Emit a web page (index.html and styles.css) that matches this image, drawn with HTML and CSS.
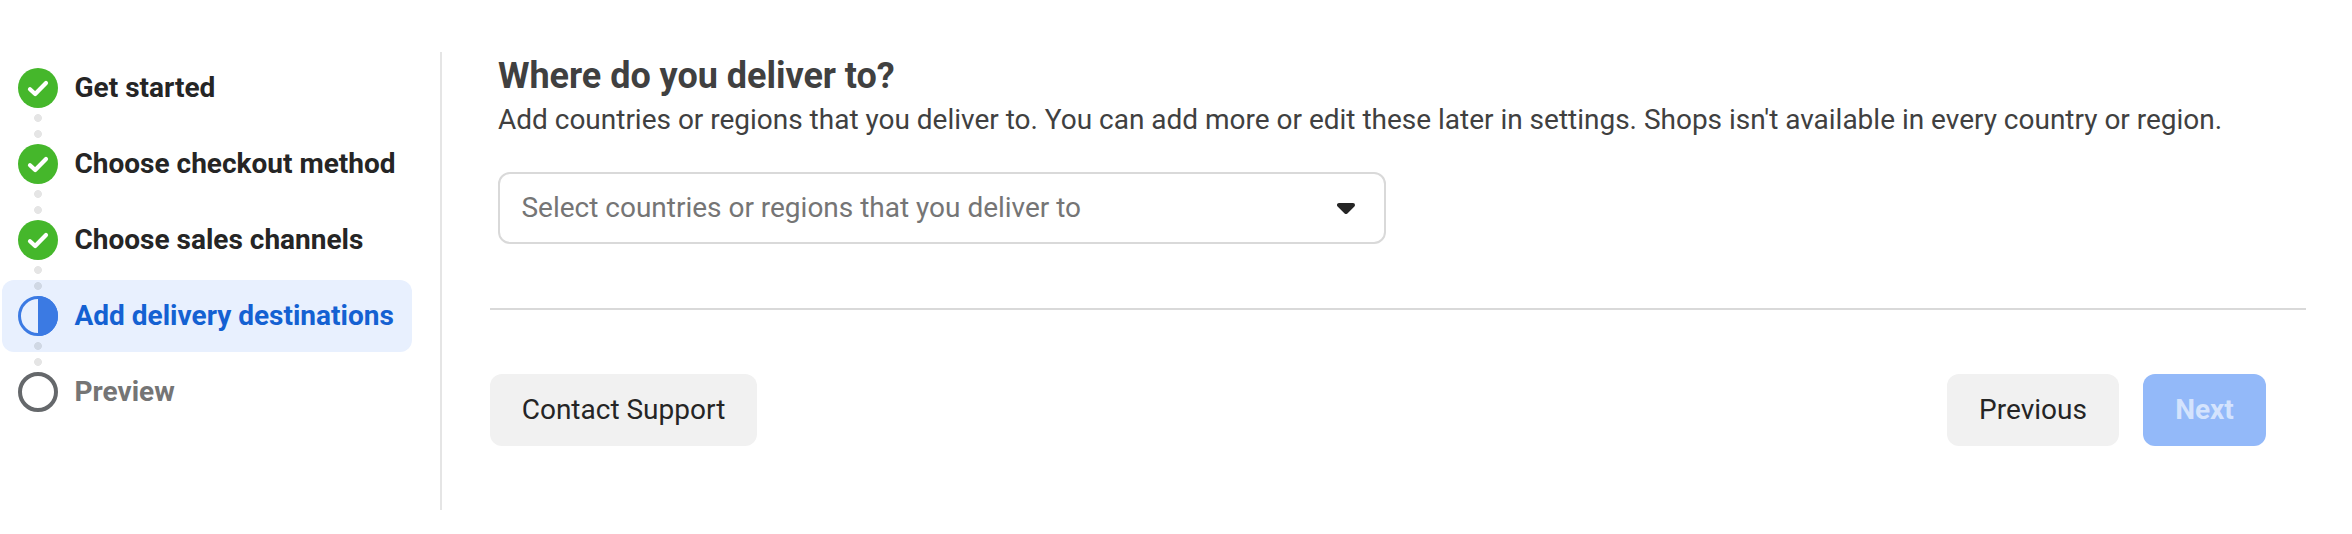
FILE: index.html
```html
<!DOCTYPE html>
<html lang="en">
<head>
  <meta charset="UTF-8" />
  <meta name="viewport" content="width=device-width, initial-scale=1.0" />
  <title>Add delivery destinations</title>
  <link rel="stylesheet" href="styles.css">
</head>
<body>
  <div class="page">
    <nav class="sidebar">
      <ol class="steps">
        <li class="step">
          <svg class="step-icon" viewBox="0 0 40 40">
            <circle cx="20" cy="20" r="20" fill="#45b72b" />
            <path d="M12 21.2 L17.2 26 L28 15" fill="none" stroke="#fff" stroke-width="4.2" stroke-linecap="round" stroke-linejoin="round" />
          </svg>
          <span>Get started</span>
        </li>
        <li class="step">
          <svg class="step-icon" viewBox="0 0 40 40">
            <circle cx="20" cy="20" r="20" fill="#45b72b" />
            <path d="M12 21.2 L17.2 26 L28 15" fill="none" stroke="#fff" stroke-width="4.2" stroke-linecap="round" stroke-linejoin="round" />
          </svg>
          <span>Choose checkout method</span>
        </li>
        <li class="step">
          <svg class="step-icon" viewBox="0 0 40 40">
            <circle cx="20" cy="20" r="20" fill="#45b72b" />
            <path d="M12 21.2 L17.2 26 L28 15" fill="none" stroke="#fff" stroke-width="4.2" stroke-linecap="round" stroke-linejoin="round" />
          </svg>
          <span>Choose sales channels</span>
        </li>
        <li class="step active">
          <svg class="step-icon" viewBox="0 0 40 40">
            <circle cx="20" cy="20" r="18.5" fill="none" stroke="#3b7ae3" stroke-width="3" />
            <path d="M20 0 A20 20 0 0 1 20 40 Z" fill="#3b7ae3" />
          </svg>
          <span>Add delivery destinations</span>
        </li>
        <li class="step upcoming">
          <svg class="step-icon" viewBox="0 0 40 40">
            <circle cx="20" cy="20" r="18" fill="none" stroke="#65686b" stroke-width="4" />
          </svg>
          <span>Preview</span>
        </li>
      </ol>
    </nav>

    <main class="content">
      <section class="question">
        <h1>Where do you deliver to?</h1>
        <p>Add countries or regions that you deliver to. You can add more or edit these later in settings. Shops isn't available in every country or region.</p>
        <div class="select" role="combobox" tabindex="0">
          <span>Select countries or regions that you deliver to</span>
          <svg class="arrow" viewBox="0 0 18 11">
            <path d="M2 2 H16 L9 9 Z" fill="#252525" stroke="#252525" stroke-width="4" stroke-linejoin="round" />
          </svg>
        </div>
      </section>

      <footer class="actions">
        <button class="btn contact" type="button">Contact Support</button>
        <div class="nav-buttons">
          <button class="btn previous" type="button">Previous</button>
          <button class="btn next" type="button" disabled>Next</button>
        </div>
      </footer>
    </main>
  </div>
</body>
</html>
```
FILE: styles.css
```css
* {
  box-sizing: border-box;
}
body {
  margin: 0;
  background: #fff;
  color: #252525;
  font-family: Roboto, "Liberation Sans", sans-serif;
  font-size: 28px;
  line-height: 40px;
}
.page {
  display: flex;
  height: 534px;
  padding: 52px 46px 24px 2px;
}

/* Steps */
.sidebar {
  width: 440px;
  flex-shrink: 0;
  border-right: 2px solid #e5e5e5;
}
.steps {
  display: flex;
  flex-direction: column;
  gap: 4px;
  width: 410px;
  margin: 0;
  padding: 0;
  list-style: none;
}
.step {
  position: relative;
  display: flex;
  align-items: center;
  gap: 16.5px;
  height: 72px;
  padding: 0 16px;
  border-radius: 12px;
  font-weight: 700;
  white-space: nowrap;
}
.step-icon {
  width: 40px;
  height: 40px;
  flex-shrink: 0;
}
.step span {
  margin-top: -1px;
}
/* two dots linking a step to the next one */
.step:not(:last-child)::after {
  content: "";
  position: absolute;
  z-index: 1;
  left: 32px;
  top: 58px;
  width: 8px;
  height: 32px;
  background: radial-gradient(circle, rgba(0, 0, 0, 0.1) 3.6px, transparent 4.2px) 0 0 / 8px 16px;
}
.step.active {
  background: #e8f0fe;
  color: #1461d2;
}
.step.upcoming {
  color: #757575;
}

/* Main column */
.content {
  flex: 1;
  padding-left: 48px;
}
.question {
  padding: 2px 0 64px 8px;
  border-bottom: 2px solid #d9d9d9;
}
h1 {
  margin: 0;
  color: #404040;
  font-size: 36px;
  font-weight: 700;
  line-height: 44px;
  letter-spacing: -0.03px;
}
p {
  margin: 2px 0 32px;
  color: #404040;
  letter-spacing: -0.01px;
  white-space: nowrap;
}
.select {
  display: flex;
  align-items: center;
  justify-content: space-between;
  width: 888px;
  height: 72px;
  padding: 0 29px 0 21.5px;
  border: 2px solid #d9d9d9;
  border-radius: 12px;
  color: #757575;
  letter-spacing: -0.01px;
}
.arrow {
  width: 18px;
  height: 11px;
}

/* Buttons */
.actions {
  display: flex;
  justify-content: space-between;
  padding: 64px 40px 0 0;
}
.nav-buttons {
  display: flex;
  gap: 24px;
}
.btn {
  height: 72px;
  padding: 0;
  border: none;
  border-radius: 12px;
  background: #f1f1f1;
  color: #252525;
  font: inherit;
}
.btn.contact {
  width: 267px;
}
.btn.previous {
  width: 172px;
}
.btn.next {
  width: 123px;
  background: #93b9f9;
  color: #d4e3fd;
  font-weight: 700;
}
```
